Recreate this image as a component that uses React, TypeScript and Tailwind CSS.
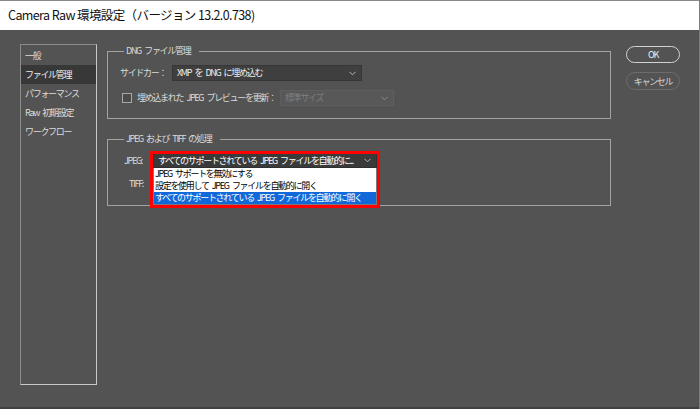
const Chevron = ({ color = "#b8b8b8" }: { color?: string }) => (
  <svg width="7" height="5" viewBox="0 0 7 5" className="shrink-0">
    <polyline points="0.5,0.8 3.5,3.8 6.5,0.8" fill="none" stroke={color} strokeWidth="1" />
  </svg>
);

const menuItems = ["一般", "ファイル管理", "パフォーマンス", "Raw 初期設定", "ワークフロー"];

const jpegOptions = [
  "JPEG サポートを無効にする",
  "設定を使用して JPEG ファイルを自動的に開く",
  "すべてのサポートされている JPEG ファイルを自動的に開く",
];

const App = () => {
  return (
    <div className="w-[700px] h-[409px] bg-[#535353] flex flex-col overflow-hidden border-r border-[#7d7d7d] font-['Noto_Sans_CJK_JP','Noto_Sans',sans-serif]">
      {/* Title bar */}
      <div className="h-[30px] shrink-0 bg-white border-t border-[#8a8a8a] flex items-center pl-[8px] text-[12.5px] tracking-[-0.6px] text-[#111]">
        Camera Raw 環境設定（バージョン 13.2.0.738)
      </div>

      <div className="flex-1 flex pt-[14px] pl-[20px] border-b-2 border-[#404040] text-[9px] tracking-[-1.3px] [word-spacing:2.5px] leading-[14px] text-[#dcdcdc] whitespace-nowrap">
        {/* Category list */}
        <div className="w-[77px] h-[341px] shrink-0 border border-t-[#8c8c8c] border-l-[#8c8c8c] border-b-[#c9c9c9] border-r-[#c9c9c9] pt-[1px]">
          {menuItems.map((item, i) => (
            <div
              key={item}
              className={`h-[19px] flex items-center pl-[4px] ${i === 1 ? "bg-[#383838] text-[#f0f0f0]" : ""}`}
            >
              {item}
            </div>
          ))}
        </div>

        {/* Settings */}
        <div className="ml-[10px] w-[504px] shrink-0">
          <fieldset className="border border-[#a3a3a3] pl-[12px] pt-[7px] pb-[12px]">
            <legend className="ml-[4px] pl-[2px] pr-[9px] leading-[14px]">DNG ファイル管理</legend>
            <div className="flex items-center h-[16px]">
              <span className="w-[52px] shrink-0">サイドカー：</span>
              <div className="w-[190px] h-[16px] bg-[#3f3f3f] border border-[#363636] flex items-center justify-between pl-[4px] pr-[5px] text-[#f0f0f0]">
                <span>XMP を DNG に埋め込む</span>
                <Chevron />
              </div>
            </div>
            <div className="flex items-center h-[16px] mt-[9px]">
              <span className="ml-[2px] w-[10px] h-[10px] shrink-0 border border-[#a8a8a8] bg-[#4b4b4b]" />
              <span className="ml-[5px] w-[143px] shrink-0">埋め込まれた JPEG プレビューを更新：</span>
              <div className="w-[114px] h-[16px] bg-[#585858] border border-[#5e5e5e] flex items-center justify-between pl-[4px] pr-[5px] text-[#7e7e7e]">
                <span>標準サイズ</span>
                <Chevron color="#8a8a8a" />
              </div>
            </div>
          </fieldset>

          <fieldset className="mt-[13px] border border-[#a3a3a3] pl-[12px] pt-[7px] pb-[14px]">
            <legend className="ml-[4px] pl-[2px] pr-[9px] leading-[14px]">JPEG および TIFF の処理</legend>
            <div className="flex items-center h-[15px]">
              <span className="w-[33px] shrink-0 text-right pr-[11px]">JPEG:</span>
              <div className="relative w-[224px] h-[15px]">
                <div className="h-[15px] bg-[#3a3a3a] border border-[#2f2f2f] flex items-center justify-between pl-[4px] pr-[5px] text-white">
                  <span>すべてのサポートされている JPEG ファイルを自動的に...</span>
                  <Chevron />
                </div>
                <div className="absolute z-10 top-full left-0 w-full bg-white border-x border-b border-[#7a7a7a] text-black leading-[12px]">
                  {jpegOptions.map((opt, i) => (
                    <div
                      key={opt}
                      className={`h-[12px] pl-[1px] ${i === 2 ? "bg-[#1169d9] text-white" : ""}`}
                    >
                      {opt}
                    </div>
                  ))}
                </div>
                {/* red highlight frame */}
                <div className="absolute z-20 left-[-3px] top-[-2px] w-[230px] h-[57px] border-[3px] border-[#ff0000] pointer-events-none" />
              </div>
            </div>
            <div className="flex items-center h-[15px] mt-[8px]">
              <span className="w-[33px] shrink-0 text-right pr-[10px]">TIFF:</span>
              <div className="w-[224px] h-[15px] bg-[#3a3a3a] border border-[#2f2f2f]" />
            </div>
          </fieldset>
        </div>

        {/* Buttons */}
        <div className="ml-[15px] mt-[2px] flex flex-col gap-[9px]">
          <button className="w-[54px] h-[17px] rounded-full border-[1.5px] border-[#d2d2d2] text-[#f0f0f0] flex items-center justify-center leading-none">
            OK
          </button>
          <button className="w-[54px] h-[18px] rounded-full border-[1.5px] border-[#6c6c6c] text-[#d6d6d6] flex items-center justify-center leading-none">
            キャンセル
          </button>
        </div>
      </div>
    </div>
  );
};

export default App;
